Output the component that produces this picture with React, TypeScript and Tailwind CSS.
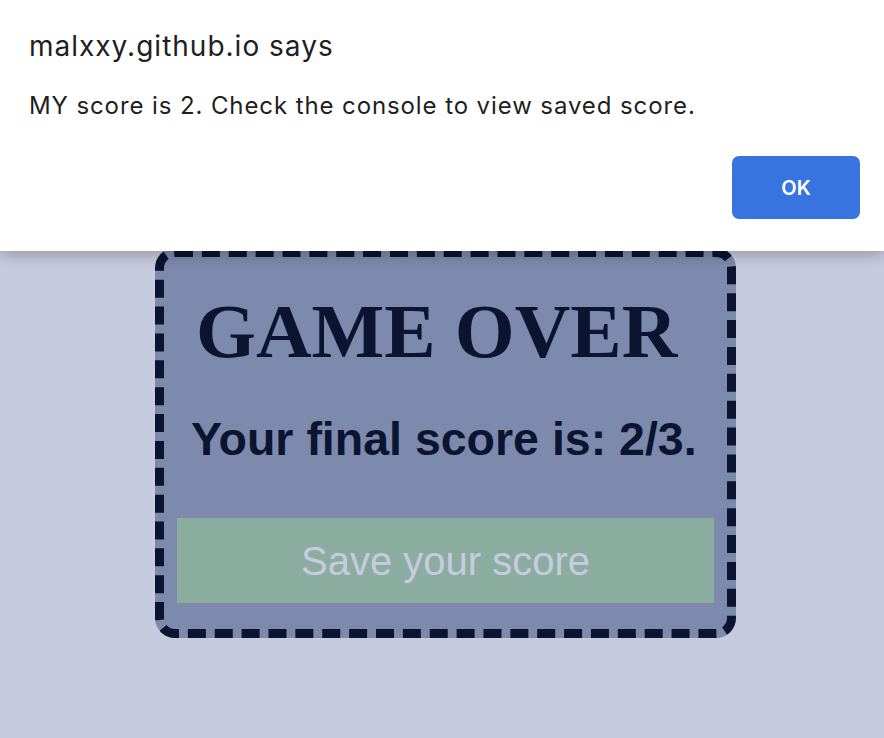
export default function App() {
  return (
    <div className="relative min-h-screen w-full overflow-hidden bg-[#c6cbdf]">
      {/* page content */}
      <div className="pt-[248px] pl-[155px]">
        <div className="w-[581px] h-[390px] rounded-[20px] border-[9px] border-dashed border-[#0b1430] bg-[#7d8aae] flex flex-col">
          <h1 className="pl-[32px] pt-[36px] text-[77px] leading-[1] font-bold text-[#0b1430] font-['Liberation_Serif',serif]">
            GAME OVER
          </h1>
          <p className="pl-[27px] pt-[46px] text-[46.5px] leading-[1] font-bold text-[#0b1430] font-['Liberation_Sans',Arial,sans-serif] whitespace-nowrap">
            Your final score is: 2/3.
          </p>
          <button className="mx-[13px] mt-auto mb-[26px] h-[85px] bg-[#8bada0] text-[#c6cbdf] text-[40px] font-['Liberation_Sans',Arial,sans-serif]">
            Save your score
          </button>
        </div>
      </div>

      {/* alert dialog */}
      <div className="absolute top-0 left-0 right-0 h-[251px] bg-white shadow-[0_4px_14px_rgba(0,0,0,0.25)] font-['Inter',sans-serif] text-[#1f1f1f]">
        <div className="pl-[29px] pt-[28px] text-[28px] leading-[36px] tracking-[1px]">malxxy.github.io says</div>
        <div className="pl-[29px] pt-[26px] text-[24px] leading-[32px] tracking-[0.9px]">
          MY score is 2. Check the console to view saved score.
        </div>
        <div className="flex justify-end pr-[24px] pt-[34px]">
          <button className="w-[128px] h-[63px] rounded-[7px] bg-[#3874e0] text-white text-[20px] font-semibold">
            OK
          </button>
        </div>
      </div>
    </div>
  );
}
